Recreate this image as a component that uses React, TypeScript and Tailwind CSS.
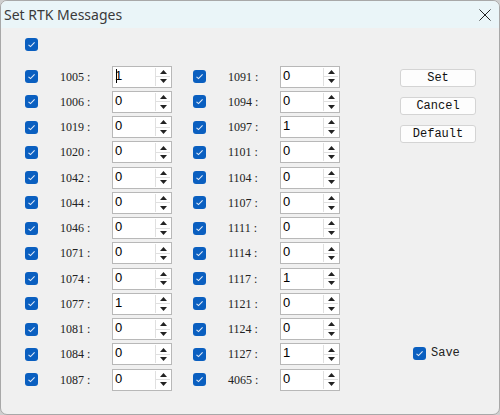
import React from 'react'

const left: [string, string][] = [
  ['1005', '1'],
  ['1006', '0'],
  ['1019', '0'],
  ['1020', '0'],
  ['1042', '0'],
  ['1044', '0'],
  ['1046', '0'],
  ['1071', '0'],
  ['1074', '0'],
  ['1077', '1'],
  ['1081', '0'],
  ['1084', '0'],
  ['1087', '0']
]

const right: [string, string][] = [
  ['1091', '0'],
  ['1094', '0'],
  ['1097', '1'],
  ['1101', '0'],
  ['1104', '0'],
  ['1107', '0'],
  ['1111', '0'],
  ['1114', '0'],
  ['1117', '1'],
  ['1121', '0'],
  ['1124', '0'],
  ['1127', '1'],
  ['4065', '0']
]

const mono = { fontFamily: '"Liberation Mono", "DejaVu Sans Mono", monospace' }
const serif = { fontFamily: '"Liberation Serif", serif' }

function Check() {
  return (
    <span className="flex h-[13px] w-[13px] shrink-0 items-center justify-center rounded-[3px] bg-[#0a5fc0]">
      <svg width="9" height="9" viewBox="0 0 9 9" fill="none">
        <path d="M1.5 4.8 L3.5 6.6 L7.6 2.4" stroke="#dfe9f7" strokeWidth="1.1" />
      </svg>
    </span>
  )
}

function Spin({ value, caret }: { value: string; caret?: boolean }) {
  return (
    <div className="flex h-[22px] w-[60px] border border-[#b8b8b8] bg-white p-px">
      <div className="relative flex-1 pl-[1px] text-[13px] leading-[16px] text-black" style={{ fontFamily: '"Liberation Sans", sans-serif' }}>
        {caret && <span className="absolute left-[2px] top-[1px] h-[14px] w-px bg-black" />}
        {value}
      </div>
      <div className="flex w-[15px] flex-col border-l border-[#e0e0e0]">
        <div className="flex flex-1 items-center justify-center border-b border-[#e0e0e0]">
          <svg width="7" height="4" viewBox="0 0 7 4">
            <path d="M0 4 L3.5 0 L7 4 Z" fill="#222" />
          </svg>
        </div>
        <div className="flex flex-1 items-center justify-center">
          <svg width="7" height="4" viewBox="0 0 7 4">
            <path d="M0 0 L7 0 L3.5 4 Z" fill="#222" />
          </svg>
        </div>
      </div>
    </div>
  )
}

function Column({ rows }: { rows: [string, string][] }) {
  return (
    <div className="flex w-[168px] flex-col">
      {rows.map(([id, v], i) => (
        <div key={id} className="flex h-[25.25px] items-center">
          <Check />
          <span className="ml-[22px] w-[52px] text-[12px] text-[#222]" style={serif}>
            {id}
            <span className="ml-[3px]">:</span>
          </span>
          <Spin value={v} caret={i === 0 && id === '1005'} />
        </div>
      ))}
    </div>
  )
}

function Btn({ label }: { label: string }) {
  return (
    <button
      className="flex h-[18px] w-[76px] items-center justify-center rounded-[3px] border border-[#d4d4d4] bg-[#fdfdfd] text-[12px] text-[#111]"
      style={mono}
    >
      {label}
    </button>
  )
}

export default function App() {
  return (
    <div className="h-[415px] w-[500px] bg-[#cfcfcf]">
      <div className="flex h-full w-full flex-col overflow-hidden rounded-[7px] border border-[#a8a8a8] bg-[#f0f0f0]">
        <div className="flex h-[27px] shrink-0 items-center justify-between bg-[#eaf5f8] pl-[3px] pr-[8px]">
          <span className="text-[14px] text-[#3a3a3a]" style={{ fontFamily: '"Noto Sans", sans-serif' }}>
            Set RTK Messages
          </span>
          <svg width="12" height="12" viewBox="0 0 12 12">
            <path d="M0.5 0.5 L11.5 11.5 M11.5 0.5 L0.5 11.5" stroke="#222" strokeWidth="1" />
          </svg>
        </div>
        <div className="flex flex-1 pl-[24px]">
          <div className="flex flex-col">
            <div className="mt-[10px] flex h-[13px]">
              <Check />
            </div>
            <div className="mt-[13px] flex">
              <Column rows={left} />
              <Column rows={right} />
            </div>
          </div>
          <div className="ml-[39px] flex flex-col">
            <div className="mt-[41px] flex flex-col gap-[10px]">
              <Btn label="Set" />
              <Btn label="Cancel" />
              <Btn label="Default" />
            </div>
            <div className="ml-[13px] mt-[201px] flex items-center gap-[5px]">
              <Check />
              <span className="text-[12px] text-[#222]" style={mono}>
                Save
              </span>
            </div>
          </div>
        </div>
      </div>
    </div>
  )
}
